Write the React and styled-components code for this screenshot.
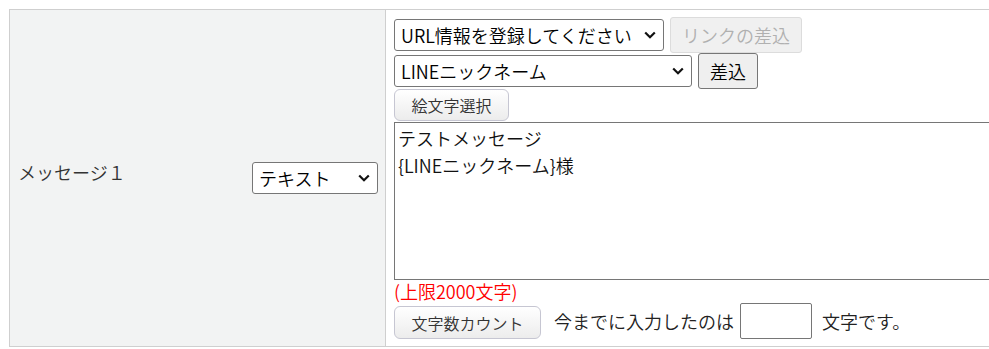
import React from 'react';
import styled, { createGlobalStyle } from 'styled-components';

const GlobalStyle = createGlobalStyle`
  html, body {
    margin: 0;
    padding: 0;
    background: #fff;
    overflow: hidden;
  }
  body {
    font-family: "Noto Sans CJK JP", "Noto Sans", sans-serif;
    font-weight: 350;
    color: #333;
  }
`;

const Page = styled.div`
  padding: 9px 0 0 9px;
  width: 1200px;
`;

const Table = styled.div`
  display: grid;
  grid-template-columns: 376px 1fr;
  width: 1100px;
  border: 1px solid #cfcfcf;
`;

const HeadCell = styled.div`
  display: flex;
  align-items: center;
  justify-content: space-between;
  padding: 0 7px 0 8px;
  background: #f2f3f3;
  border-right: 1px solid #cfcfcf;
`;

const Label = styled.span`
  font-size: 18px;
  color: #333;
  padding-bottom: 13px;
`;

const BodyCell = styled.div`
  display: flex;
  flex-direction: column;
  align-items: flex-start;
  padding: 7px 0 7px 8px;
`;

const Row = styled.div`
  display: flex;
  align-items: ${(p) => p.$align || 'center'};
  gap: 6px;
  height: ${(p) => p.$height || 36}px;
  margin-top: ${(p) => p.$top || 0}px;
`;

const SelectBox = styled.div`
  position: relative;
  display: inline-flex;
  width: ${(p) => p.$width}px;
  height: 32px;
`;

const NativeSelect = styled.select`
  appearance: none;
  -webkit-appearance: none;
  width: 100%;
  height: 100%;
  box-sizing: border-box;
  border: 1px solid #767676;
  border-radius: 3px;
  background: #fff;
  padding: 0 26px 0 6px;
  font-family: inherit;
  font-weight: inherit;
  font-size: 18px;
  color: #000;
  outline: none;
`;

const Chevron = styled.svg`
  position: absolute;
  right: 8px;
  top: 50%;
  margin-top: -4px;
  width: 12px;
  height: 8px;
  pointer-events: none;
`;

const Select = ({ width, value, options }) => (
  <SelectBox $width={width}>
    <NativeSelect defaultValue={value}>
      {options.map((o) => (
        <option key={o} value={o}>{o}</option>
      ))}
    </NativeSelect>
    <Chevron viewBox="0 0 12 8">
      <polyline points="1.2,1.5 6,6.2 10.8,1.5" fill="none" stroke="#111" strokeWidth="2.2" />
    </Chevron>
  </SelectBox>
);

const PlainButton = styled.button`
  box-sizing: border-box;
  width: ${(p) => p.$width}px;
  height: 36px;
  padding: 0;
  border: 1px solid ${(p) => (p.disabled ? '#dcdcdc' : '#767676')};
  border-radius: 3px;
  background: ${(p) => (p.disabled ? '#f0f0f0' : '#efefef')};
  color: ${(p) => (p.disabled ? '#b0b0b0' : '#000')};
  font-family: inherit;
  font-weight: inherit;
  font-size: 18px;
`;

const SoftButton = styled.button`
  box-sizing: border-box;
  width: ${(p) => p.$width}px;
  height: ${(p) => p.$height || 32}px;
  padding: 0;
  border: 1px solid #c6c6d2;
  border-radius: 6px;
  background: linear-gradient(#ffffff, #ececec);
  color: #333;
  font-family: inherit;
  font-weight: inherit;
  font-size: 16px;
`;

const MessageArea = styled.textarea`
  box-sizing: border-box;
  width: 640px;
  height: 158px;
  margin-top: 1px;
  padding: 2px 3px;
  border: 1px solid #767676;
  border-radius: 0;
  resize: none;
  font-family: inherit;
  font-weight: inherit;
  font-size: 18px;
  line-height: 27px;
  color: #111;
  outline: none;
`;

const Limit = styled.div`
  font-size: 18px;
  line-height: 22px;
  color: #ff0000;
`;

const Inline = styled.span`
  font-size: 18px;
  line-height: 36px;
  color: #222;
  margin-left: ${(p) => p.$left || 0}px;
`;

const CountBox = styled.input`
  box-sizing: border-box;
  width: 72px;
  height: 36px;
  border: 1px solid #767676;
  border-radius: 2px;
  margin: 0;
  font-size: 18px;
`;

export default function App() {
  return (
    <>
      <GlobalStyle />
      <Page>
        <Table>
          <HeadCell>
            <Label>メッセージ１</Label>
            <Select width={126} value="テキスト" options={['テキスト', 'スタンプ', '画像']} />
          </HeadCell>
          <BodyCell>
            <Row>
              <Select width={270} value="URL情報を登録してください" options={['URL情報を登録してください']} />
              <PlainButton $width={132} disabled>リンクの差込</PlainButton>
            </Row>
            <Row>
              <Select width={298} value="LINEニックネーム" options={['LINEニックネーム']} />
              <PlainButton $width={60}>差込</PlainButton>
            </Row>
            <Row $height={32}>
              <SoftButton $width={115}>絵文字選択</SoftButton>
            </Row>
            <MessageArea defaultValue={'テストメッセージ\n{LINEニックネーム}様'} />
            <Limit>(上限2000文字)</Limit>
            <Row $align="flex-end" $top={1}>
              <SoftButton $width={147} $height={33}>文字数カウント</SoftButton>
              <Inline $left={7}>今までに入力したのは</Inline>
              <CountBox type="text" />
              <Inline $left={4}>文字です。</Inline>
            </Row>
          </BodyCell>
        </Table>
      </Page>
    </>
  );
}
